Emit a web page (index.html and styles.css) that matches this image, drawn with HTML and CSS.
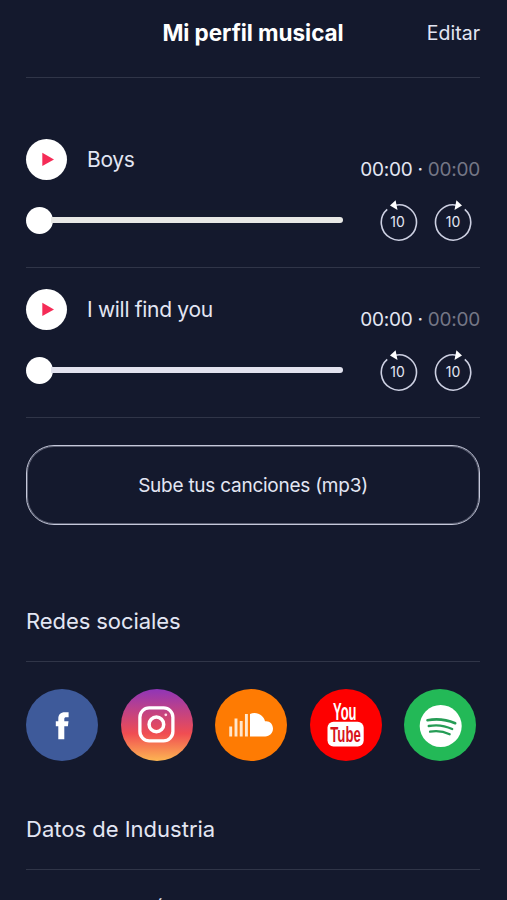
FILE: index.html
```
<!DOCTYPE html>
<html lang="es">
<head>
<meta charset="utf-8">
<title>Mi perfil musical</title>
<link rel="stylesheet" href="styles.css">
</head>
<body>
<svg class="defs" width="0" height="0" aria-hidden="true">
  <defs>
    <linearGradient id="insta" x1="0" y1="0" x2="0" y2="1">
      <stop offset="0" stop-color="#8f35b8"/>
      <stop offset=".25" stop-color="#b8408e"/>
      <stop offset=".62" stop-color="#f04d52"/>
      <stop offset="1" stop-color="#fdb652"/>
    </linearGradient>
    <symbol id="play" viewBox="0 0 41 41">
      <path d="M16.300 13.700v13.400l11.700-6.700z" fill="#f52b56"/>
    </symbol>
    <symbol id="back" viewBox="0 0 38 44">
      <path d="M7.200 11.300 A17.600 17.600 0 1 0 15.500 7.200" fill="none" stroke="#cdd0e2" stroke-width="1.600"/>
      <path d="M10 7.600 15.600 2.300 17.500 12z" fill="#fff"/>
    </symbol>
    <symbol id="forward" viewBox="0 0 38 44">
      <path d="M30.800 11.300 A17.600 17.600 0 1 1 22.500 7.200" fill="none" stroke="#cdd0e2" stroke-width="1.600"/>
      <path d="M28 7.600 22.400 2.300 20.500 12z" fill="#fff"/>
    </symbol>
  </defs>
</svg>
<main class="screen">
  <header class="header">
    <h1 class="title">Mi perfil musical</h1>
    <a class="edit">Editar</a>
  </header>

  <section class="songs">
    <article class="song">
      <div class="player">
        <div class="song-head">
          <svg class="play"><use href="#play"/></svg>
          <span class="name">Boys</span>
        </div>
        <div class="slider"><span class="knob"></span><span class="track"></span></div>
      </div>
      <div class="side">
        <div class="time">00:00 · <span class="total">00:00</span></div>
        <div class="skips">
          <div class="skip back"><svg><use href="#back"/></svg><span>10</span></div>
          <div class="skip"><svg><use href="#forward"/></svg><span>10</span></div>
        </div>
      </div>
    </article>
    <article class="song">
      <div class="player">
        <div class="song-head">
          <svg class="play"><use href="#play"/></svg>
          <span class="name">I will find you</span>
        </div>
        <div class="slider"><span class="knob"></span><span class="track lilac"></span></div>
      </div>
      <div class="side">
        <div class="time">00:00 · <span class="total">00:00</span></div>
        <div class="skips">
          <div class="skip back"><svg><use href="#back"/></svg><span>10</span></div>
          <div class="skip"><svg><use href="#forward"/></svg><span>10</span></div>
        </div>
      </div>
    </article>
  </section>

  <button class="upload">Sube tus canciones (mp3)</button>

  <h2 class="section">Redes sociales</h2>
  <div class="social">
    <svg viewBox="0 0 72 72"><circle cx="36" cy="36" r="36" fill="#3e5a9a"/>
      <path d="M32.300 50.300V37.300h-2.500v-5h2.500v-2.400c0-4.500 2.300-6.700 6.500-6.700h3.800v5h-2.300c-1.500 0-2 .6-2 1.900v2.200h4.200l-.6 5h-3.600v13z" fill="#fff"/></svg>
    <svg viewBox="0 0 72 72"><circle cx="36" cy="36" r="36" fill="url(#insta)"/>
      <g fill="none" stroke="#fff"><rect x="18.900" y="18.900" width="33" height="33" rx="9.300" stroke-width="3.300"/><circle cx="35.400" cy="35.400" r="7.300" stroke-width="3.500"/></g>
      <circle cx="44.800" cy="25.800" r="1.400" fill="#ffdbe4"/></svg>
    <svg viewBox="0 0 72 72"><circle cx="36" cy="36" r="36" fill="#fe7b03"/>
      <path d="M15.700 37.500v10M21 29.500v18M26.200 32v15.500M31.400 25v22.500" stroke="#ffe6cc" stroke-width="2.900"/>
      <path d="M35 47.500V25q2-1 4.500-1c5.400 0 9.500 3.700 10.500 8.300 4.300-.9 8 2.500 8 7.300 0 4.600-3.500 7.900-7.700 7.900z" fill="#fff"/></svg>
    <svg viewBox="0 0 72 72"><circle cx="36" cy="36" r="36" fill="#fe0000"/>
      <rect x="17.500" y="32.700" width="36.200" height="24.800" rx="6" fill="#fff"/>
      <text class="yt you" x="23" y="30.500" textLength="23.500" lengthAdjust="spacingAndGlyphs">You</text>
      <text class="yt tube" x="20.300" y="52.600" textLength="30.500" lengthAdjust="spacingAndGlyphs">Tube</text></svg>
    <svg viewBox="0 0 72 72"><circle cx="36" cy="36" r="36" fill="#23b957"/>
      <circle cx="36.700" cy="37" r="21" fill="#fff"/>
      <g fill="none" stroke="#259c55" stroke-linecap="round"><path d="M23.500 31.200q14-2.700 27.700 3" stroke-width="2.600"/><path d="M24.700 37q12.300-2.300 23.500 3" stroke-width="2.300"/><path d="M26 42.700q10.200-2 19.700 2.600" stroke-width="2.200"/></g></svg>
  </div>

  <h2 class="section industry">Datos de Industria</h2>
  <div class="next">´</div>
</main>
</body>
</html>
```

FILE: styles.css
```
* { box-sizing: border-box; }
body { margin: 0; background: #14192d; }
.defs { display: block; }
.screen {
  height: 900px;
  padding: 0 27px 0 26px;
  overflow: hidden;
  font-family: Inter, "Liberation Sans", sans-serif;
  color: #e3e6f3;
}
.header {
  display: grid;
  grid-template-columns: 1fr auto 1fr;
  align-items: center;
  height: 78px;
  padding-bottom: 11px;
  border-bottom: 1px solid #303548;
}
.title {
  grid-column: 2;
  margin: 0;
  font-size: 22.500px;
  font-weight: 700;
  line-height: 64px;
  letter-spacing: -.05px;
  color: #fff;
  white-space: nowrap;
}
.edit { justify-self: end; font-size: 19.500px; }

.songs { padding-top: 40px; }
.song {
  display: flex;
  justify-content: space-between;
  height: 150px;
  padding-top: 20px;
  border-bottom: 1px solid #303548;
}
.player { width: 317px; }
.song-head { display: flex; align-items: center; gap: 20px; height: 42px; }
.play { width: 41px; height: 41px; border-radius: 50%; background: #fff; }
.name { font-size: 21px; letter-spacing: -.3px; white-space: nowrap; }
.slider { display: flex; align-items: center; height: 28px; margin-top: 26px; }
.knob { width: 27px; height: 27px; border-radius: 50%; background: #fff; }
.track { flex: 1; height: 6px; margin-left: -2px; border-radius: 0 3px 3px 0; background: #e8e8e6; }
.track.lilac { background: #e2e2ee; }

.side { display: flex; flex-direction: column; align-items: flex-end; }
.time { margin-top: 20px; font-size: 19px; line-height: 24px; letter-spacing: -.25px; white-space: nowrap; }
.total { color: #747685; }
.skips { display: flex; gap: 16px; margin: 16px 8px 0 0; }
.skip { display: grid; width: 38px; height: 44px; place-items: center; }
.skip svg, .skip span { grid-area: 1 / 1; }
.skip svg { width: 38px; height: 44px; }
.skip span { padding-top: 3px; font-size: 14px; line-height: 16px; }
.skip.back span { padding-right: 3px; }

.upload {
  display: block;
  width: 100%;
  height: 80px;
  margin-top: 27px;
  border: 1px solid #c5c8da;
  border-radius: 28px;
  background: none;
  box-shadow: inset 0 0 0 1px rgba(197, 200, 218, .4);
  color: inherit;
  font: 19px Inter, "Liberation Sans", sans-serif;
  letter-spacing: -.25px;
}
.section {
  height: 137px;
  margin: 0;
  padding-top: 80px;
  border-bottom: 1px solid #303548;
  font-size: 22px;
  font-weight: 400;
  line-height: 32px;
  letter-spacing: -.08px;
}
.social { display: flex; justify-content: space-between; padding: 27px 4px 0 0; }
.social svg { width: 72px; height: 72px; }
.yt { font-family: "Liberation Sans Narrow", "Liberation Sans", sans-serif; font-weight: 700; }
.you { font-size: 23px; fill: #fff; }
.tube { font-size: 21.500px; fill: #d8141c; }
.section.industry { height: 109px; padding-top: 52px; letter-spacing: 0; }
.next { margin-top: 25px; padding-left: 131px; font-size: 19px; line-height: 24px; }
```
